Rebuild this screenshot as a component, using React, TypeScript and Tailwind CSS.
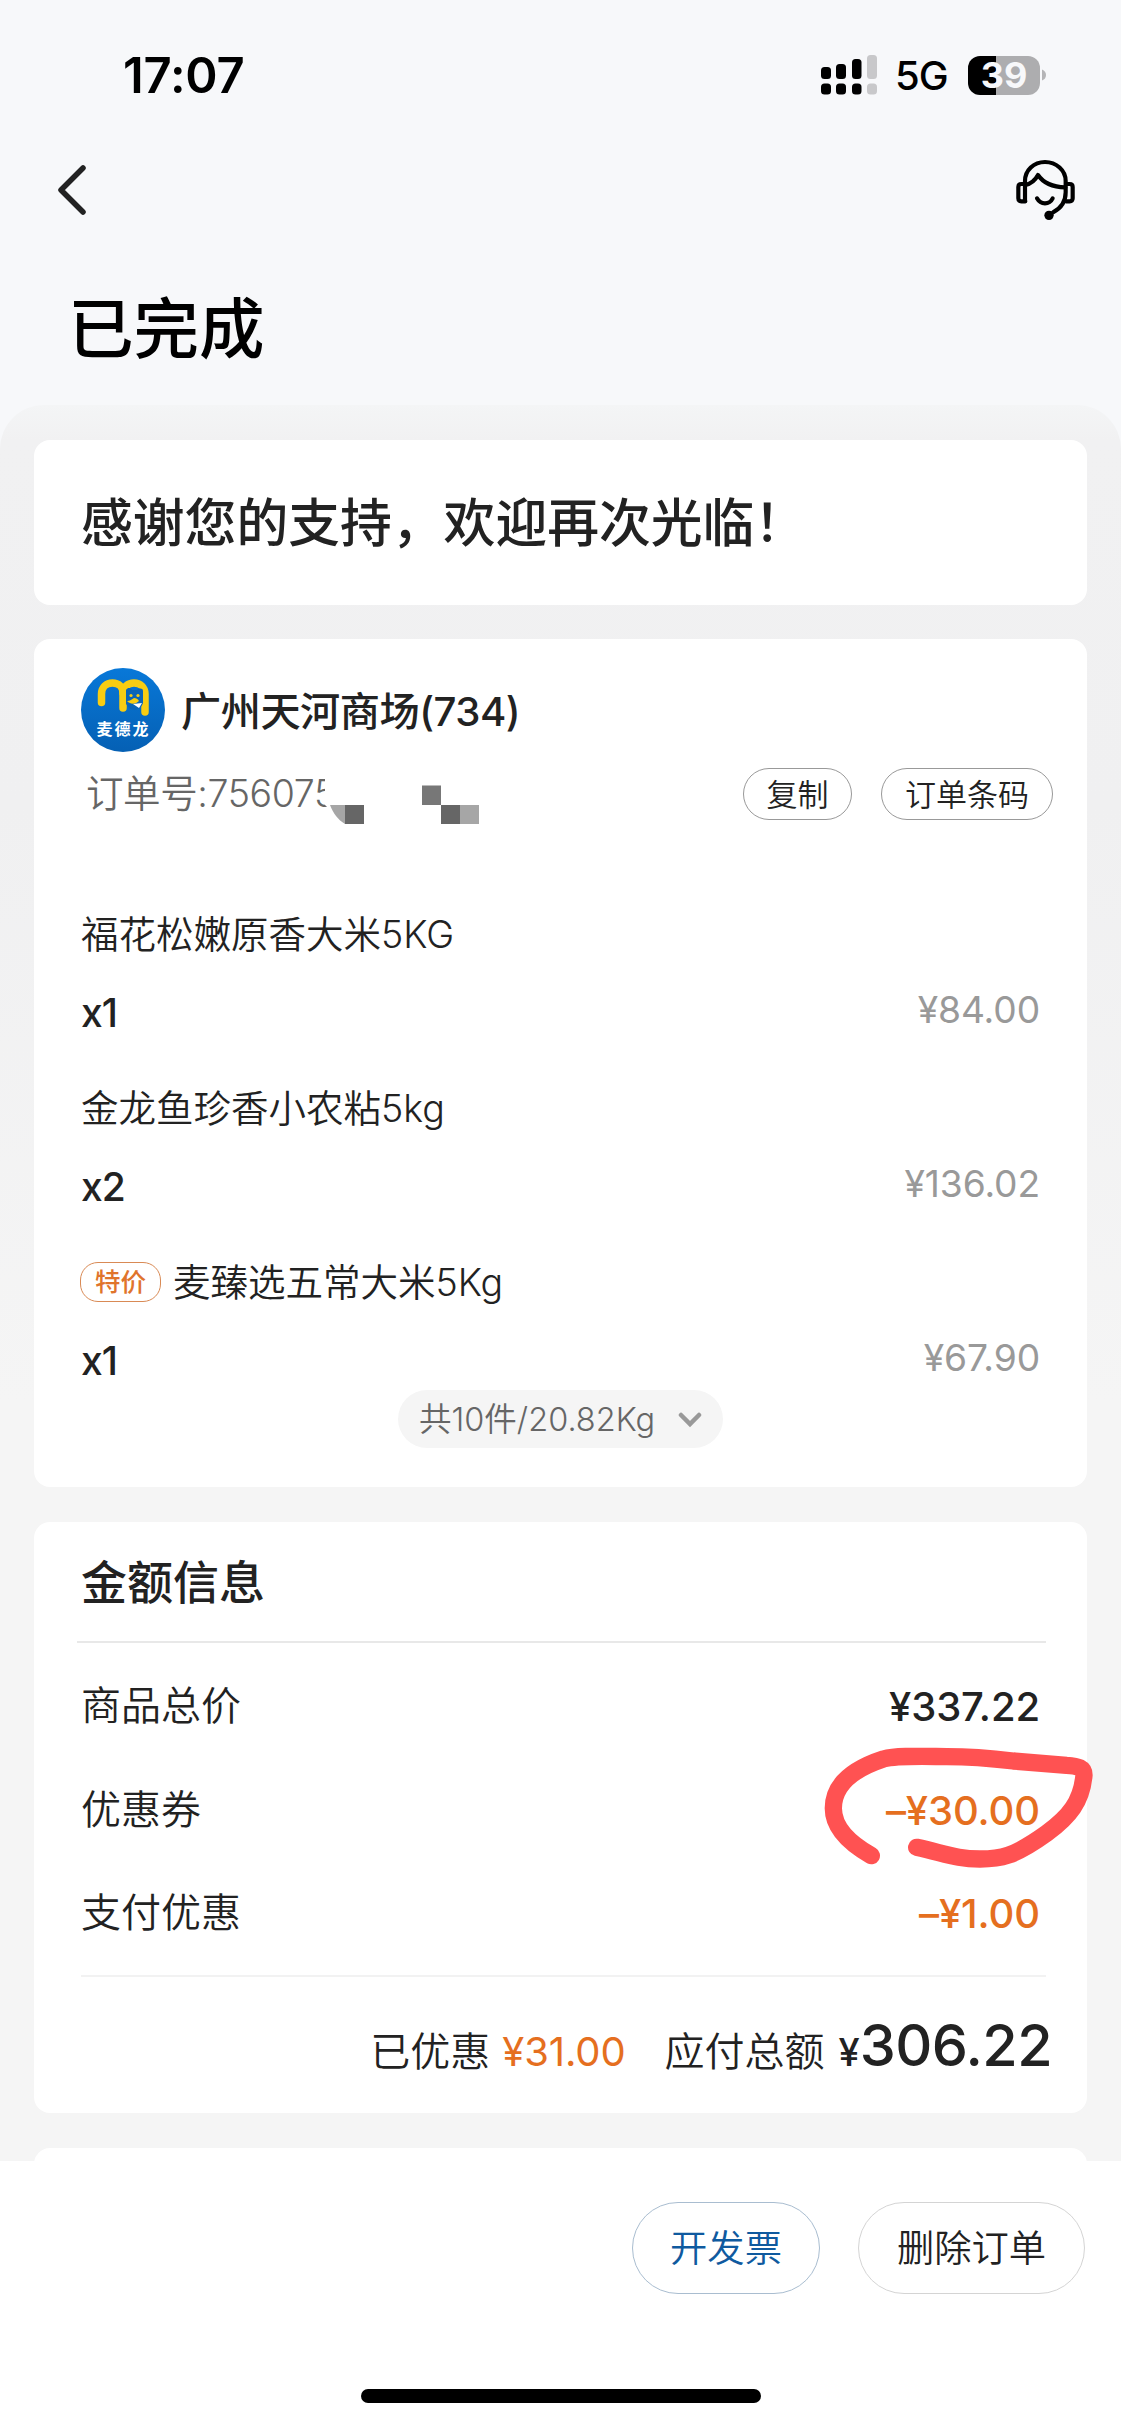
import type { ReactNode } from 'react'

interface OrderItem {
  name: string
  count: number
  price: string
  tag?: string
}

const items: OrderItem[] = [
  { name: '福花松嫩原香大米5KG', count: 1, price: '¥84.00' },
  { name: '金龙鱼珍香小农粘5kg', count: 2, price: '¥136.02' },
  { name: '麦臻选五常大米5Kg', count: 1, price: '¥67.90', tag: '特价' },
]

function StatusBar() {
  return (
    <div className="flex h-[150px] items-center pl-[123px] pr-[75px]">
      <span className="text-[49px] leading-none font-semibold tracking-[-0.2px] text-black">17:07</span>
      <div className="ml-auto flex items-center">
        <svg className="h-[40px] w-[58px]" viewBox="0 0 58 40">
          <g fill="#000">
            <rect x="1" y="12" width="10" height="12" rx="3.5" />
            <rect x="16" y="9" width="10" height="15" rx="3.5" />
            <rect x="32" y="4" width="9.5" height="20" rx="3.5" />
            <rect x="1" y="28.500" width="10" height="11" rx="3.5" />
            <rect x="16" y="28.500" width="10" height="11" rx="3.5" />
            <rect x="32" y="28.500" width="9.5" height="11" rx="3.5" />
          </g>
          <g fill="#c8c8ca">
            <rect x="47" y="0" width="10" height="24" rx="3.5" />
            <rect x="47" y="28.500" width="10" height="11" rx="3.5" />
          </g>
        </svg>
        <span className="ml-[17px] w-[53px] pt-[2px] text-[40px] leading-none font-[450] tracking-[-1px] text-black">5G</span>
        <div className="ml-[20px] flex h-[39px] w-[72px] items-center justify-center rounded-[12px] bg-[linear-gradient(90deg,#000_28px,#adadaf_28px)] text-[36px] leading-none font-bold text-[#f7f8fa]">
          39
        </div>
        <svg className="ml-[2px] h-[12px] w-[4px]" viewBox="0 0 4 12">
          <path d="M0 0.500Q4 2 4 6T0 11.500Z" fill="#b5b5b7" />
        </svg>
      </div>
    </div>
  )
}

function HeadsetIcon() {
  return (
    <svg className="h-[62px] w-[60px]" viewBox="0 0 180 186" fill="none" stroke="#000" strokeWidth="12.500" strokeLinecap="round" strokeLinejoin="round">
      <path d="M30 125V66C30 34 56 9 90 9s62 25 62 57v34c0 28-14 48-38 60" />
      <path d="M31 127H19c-6 0-9-3-9-9V84c0-6 3-9 9-9h11" />
      <path d="M153 75h11c6 0 9 3 9 9v34c0 6-3 9-9 9h-11" />
      <path d="M31 78c17-4 29-13 38-30 16 24 42 36 82 37" />
      <path d="M66 118c11 20 37 20 47 0" />
      <circle cx="102" cy="169" r="14" fill="#000" stroke="none" />
    </svg>
  )
}

function StoreLogo() {
  return (
    <svg className="h-[84px] w-[84px]" viewBox="0 0 84 84">
      <defs>
        <linearGradient id="logo-bg" x1="0" y1="0" x2="0" y2="1">
          <stop offset="0" stopColor="#0878d8" />
          <stop offset="1" stopColor="#0560b4" />
        </linearGradient>
      </defs>
      <circle cx="42" cy="42" r="42" fill="url(#logo-bg)" />
      <g fill="none" stroke="#f8cd12" strokeWidth="7.500" strokeLinecap="round">
        <path d="M20.500 34.500V26c0-7 5-11 11-11s10.500 4 10.500 10v15" />
        <path d="M42 25c0-6 5-10 11-10s11 4 11 11v18" />
      </g>
      <path d="M45 22c2-3 5-2 6 0h5c2-2 6-2 6 1v12c-2 6-7 8-13 6l-4-5z" fill="#0a65b8" />
      <circle cx="50" cy="27.500" r="1.600" fill="#f8cd12" />
      <circle cx="57" cy="27.500" r="1.600" fill="#f8cd12" />
      <path d="M46 33c3 0 5-2 7-3 2 0 4 1 5 3-3 3-8 4-12 0z" fill="#f8cd12" />
      <path d="M52 36l9-1-3 5z" fill="#fff" />
      <text x="42.500" y="67" textAnchor="middle" fontSize="16" letterSpacing="2" fontWeight="700" fill="#fff">
        麦德龙
      </text>
    </svg>
  )
}

function Card({ className, children }: { className: string; children?: ReactNode }) {
  return <div className={`rounded-[16px] bg-white pl-[47px] pr-[47px] ${className}`}>{children}</div>
}

function AmountRow({ label, value, highlight }: { label: string; value: string; highlight?: boolean }) {
  return (
    <div className="flex h-[103.5px] items-center justify-between">
      <span className="text-[40px] leading-none font-[350]">{label}</span>
      <span className={`pt-[2px] text-[40px] leading-none font-medium tracking-[-0.1px] ${highlight ? 'text-[#e56f1f]' : ''}`}>{value}</span>
    </div>
  )
}

export default function App() {
  return (
    <div className="flex h-[2426px] w-[1121px] flex-col overflow-hidden bg-[#f7f8fa] font-['Inter','Noto_Sans_CJK_SC',sans-serif] text-[#222]">
      <StatusBar />

      <div className="flex h-[80px] items-center justify-between pl-[58px] pr-[46px]">
        <svg className="h-[50px] w-[28px]" viewBox="0 0 28 50" fill="none" stroke="#222" strokeWidth="5.500" strokeLinecap="round" strokeLinejoin="round">
          <path d="M25 3L3 25l22 22" />
        </svg>
        <HeadsetIcon />
      </div>

      <h1 className="mt-[67px] ml-[68px] text-[65.5px] leading-[65px] font-medium text-black">已完成</h1>

      <div className="mt-[43px] flex h-[1756px] flex-col overflow-hidden rounded-t-[44px] bg-[linear-gradient(180deg,#f4f5f6_0px,#f1f1f2_35px,#f0f0f1_400px,#f5f5f5_1000px)] px-[34px] pt-[35px]">
        <Card className="flex h-[165px] shrink-0 items-center pt-[2px]">
          <h2 className="text-[51.8px] leading-none font-medium">感谢您的支持，欢迎再次光临！</h2>
        </Card>

        <Card className="mt-[34px] flex h-[848px] shrink-0 flex-col pt-[29px]">
          <div className="flex h-[84px] items-center">
            <StoreLogo />
            <span className="ml-[16px] pt-[5px] text-[40.2px] leading-none font-medium tracking-[-0.5px]">广州天河商场(734)</span>
          </div>

          <div className="-mr-[13px] mt-[16px] flex h-[52px] items-center">
            <div className="relative ml-[5px] h-[52px] w-[400px] text-[37.5px] leading-[52px] font-[350] text-[#666]">
              <span className="whitespace-nowrap tracking-[-0.4px]">订单号:756075</span>
              {/* masked part of the order number */}
              <svg className="absolute top-0 left-[236px] h-[56px] w-[164px]" viewBox="0 0 164 56">
                <path d="M3 0h161v56H15C13 48 9 42 3 37z" fill="#fff" />
                <path d="M8 37h15v19C16 52 11 45 8 37z" fill="#a6a6a6" />
                <rect x="23" y="37" width="19" height="19" fill="#666" />
                <rect x="100" y="17.500" width="19" height="19.500" fill="#777" />
                <rect x="119" y="37" width="19" height="19" fill="#666" />
                <rect x="138" y="37" width="19" height="19" fill="#a6a6a6" />
              </svg>
            </div>
            <button className="ml-auto h-[52px] w-[109px] rounded-full border-[1.5px] border-[#999] text-[31px] leading-none font-[350]">复制</button>
            <button className="ml-[29px] h-[52px] w-[172px] rounded-full border-[1.5px] border-[#999] text-[31px] leading-none font-[350]">订单条码</button>
          </div>

          <div className="mt-[94px] flex flex-col gap-[56px]">
            {items.map((item) => (
              <div key={item.name} className="flex flex-col gap-[38px]">
                <div className="flex h-[40px] items-center">
                  {item.tag && (
                    <span className="-ml-[1px] mr-[12px] flex h-[40px] w-[81px] items-center justify-center rounded-[18px] border-[1.5px] border-[#d98a55] text-[25.5px] leading-none font-medium text-[#e0742c]">
                      {item.tag}
                    </span>
                  )}
                  <span className="pt-[2px] text-[37.5px] leading-none font-[350]">{item.name}</span>
                </div>
                <div className="flex h-[40px] items-center justify-between">
                  <span className="text-[39px] leading-none font-medium tracking-[-1px]">x{item.count}</span>
                  <span className="-mt-[5px] text-[37.2px] leading-none tracking-[-0.1px] text-[#999]">{item.price}</span>
                </div>
              </div>
            ))}
          </div>

          <div className="mx-auto mt-[10px] flex h-[58px] w-[325px] items-center rounded-full bg-[#f5f5f5] pl-[21px] text-[32.5px] leading-none text-[#666]">
            <span className="w-[238px] pt-[2px] font-[350] whitespace-nowrap">共10件/20.82Kg</span>
            <svg className="mt-[2px] ml-[21px] h-[16px] w-[24px]" viewBox="0 0 24 16" fill="none" stroke="#999" strokeWidth="4.500" strokeLinecap="round">
              <path d="M3 3l9 9 9-9" />
            </svg>
          </div>
        </Card>

        <Card className="relative mt-[35px] h-[591px] shrink-0">
          <h3 className="flex h-[119px] items-center text-[46px] leading-none font-medium">金额信息</h3>
          <div className="-mr-[6px] -ml-[4px] h-[1.5px] bg-[#e8e8e8]" />
          <div className="pt-[12px]">
            <AmountRow label="商品总价" value="¥337.22" />
            <AmountRow label="优惠券" value="–¥30.00" highlight />
            <AmountRow label="支付优惠" value="–¥1.00" highlight />
          </div>
          <div className="mt-[10px] -mr-[6px] h-[1.5px] bg-[#f2f2f2]" />
          <div className="-mr-[12px] mt-[38px] flex items-baseline justify-end leading-[60px]">
            <span className="text-[40px] font-[350]">已优惠</span>
            <span className="ml-[12px] text-[40px] tracking-[-0.1px] text-[#e56f1f]">¥31.00</span>
            <span className="ml-[39px] text-[40px] font-[350]">应付总额</span>
            <span className="ml-[14px] text-[38px] font-medium">¥</span>
            <span className="text-[57.5px] font-medium tracking-[-0.6px]">306.22</span>
          </div>

          {/* hand-drawn circle round the coupon amount */}
          <svg className="pointer-events-none absolute top-[138px] left-[746px] h-[290px] w-[341px] overflow-visible" viewBox="0 0 1023 870" fill="none" stroke="#ff5252" strokeWidth="52" strokeLinecap="round" strokeLinejoin="round">
            <path d="M274 587C205 548 160 500 160 445C160 370 225 325 310 297C350 286 420 289 500 290C560 290 640 296 700 303L860 316C895 318 912 324 912 345C905 425 868 470 800 520C700 592 660 597 600 597C530 597 500 582 410 562" />
          </svg>
        </Card>

        <Card className="mt-[35px] h-[60px] shrink-0" />
      </div>

      <div className="flex h-[265px] flex-col items-center bg-white">
        <div className="mt-[41px] flex w-full justify-end gap-[38px] pr-[36px] text-[37.3px] leading-none font-[350]">
          <button className="h-[92px] w-[188px] rounded-full border-[1.5px] border-[#a9bdd0] pt-[1px] text-[#0f5a9f]">开发票</button>
          <button className="h-[92px] w-[227px] rounded-full border-[1.5px] border-[#d4d4d4] pt-[1px]">删除订单</button>
        </div>
        <div className="mt-[95px] h-[14px] w-[400px] rounded-full bg-black" />
      </div>
    </div>
  )
}
